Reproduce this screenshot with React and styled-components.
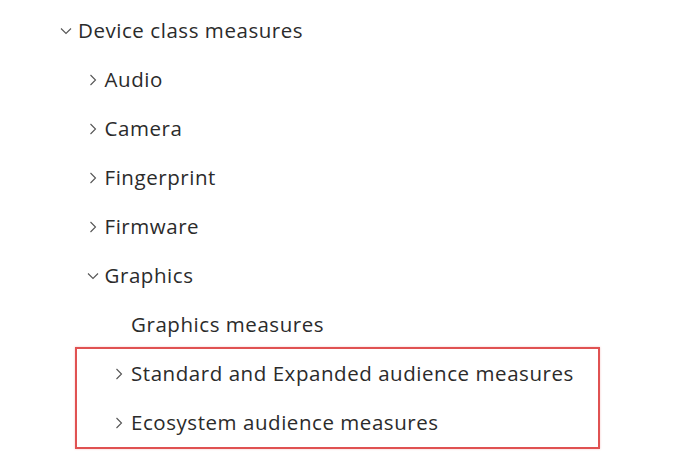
import React from "react";
import styled, { createGlobalStyle } from "styled-components";

const Global = createGlobalStyle`
  html, body { margin: 0; padding: 0; background: #ffffff; }
  body { font-family: "Open Sans", "Noto Sans", sans-serif; }
`;

const Tree = styled.ul`
  list-style: none;
  margin: 0;
  padding: 6px 0 0 0;
  width: 686px;
  height: 469px;
  box-sizing: border-box;
  overflow: hidden;
`;

const Row = styled.li`
  display: flex;
  align-items: center;
  height: 49px;
  padding-left: ${(p) => 56 + p.$level * 26.5}px;
  box-sizing: border-box;
  color: #2b2b2b;
  font-size: 20.5px;
  letter-spacing: 0.55px;
  white-space: nowrap;
`;

const Toggle = styled.span`
  display: inline-flex;
  align-items: center;
  justify-content: center;
  width: 20px;
  height: 20px;
  margin-right: 2px;
  color: #555555;
  flex: none;
`;

const Label = styled.span`
  line-height: 1;
`;

const Highlight = styled.li`
  list-style: none;
  margin-left: 77px;
  width: 521px;
  box-sizing: border-box;
  box-shadow: 0 0 0 2px #e05252, 0 0 2px 2px rgba(224, 82, 82, 0.35);
`;

const Inner = styled.ul`
  list-style: none;
  margin: 0;
  padding: 0;
  margin-left: -77px;
`;

const Chevron = ({ open }) =>
  open ? (
    <svg width="12" height="8" viewBox="0 0 12 8">
      <path d="M1 1.5 L6 6.5 L11 1.5" fill="none" stroke="currentColor" strokeWidth="1.1" />
    </svg>
  ) : (
    <svg width="8" height="12" viewBox="0 0 8 12">
      <path d="M1.5 1 L6.5 6 L1.5 11" fill="none" stroke="currentColor" strokeWidth="1.1" />
    </svg>
  );

const Item = ({ level, label, state }) => (
  <Row $level={level}>
    <Toggle>{state ? <Chevron open={state === "open"} /> : null}</Toggle>
    <Label>{label}</Label>
  </Row>
);

export default function App() {
  return (
    <>
      <Global />
      <Tree>
        <Item level={0} state="open" label="Device class measures" />
        <Item level={1} state="closed" label="Audio" />
        <Item level={1} state="closed" label="Camera" />
        <Item level={1} state="closed" label="Fingerprint" />
        <Item level={1} state="closed" label="Firmware" />
        <Item level={1} state="open" label="Graphics" />
        <Item level={2} label="Graphics measures" />
        <Highlight>
          <Inner>
            <Item level={2} state="closed" label="Standard and Expanded audience measures" />
            <Item level={2} state="closed" label="Ecosystem audience measures" />
          </Inner>
        </Highlight>
      </Tree>
    </>
  );
}
